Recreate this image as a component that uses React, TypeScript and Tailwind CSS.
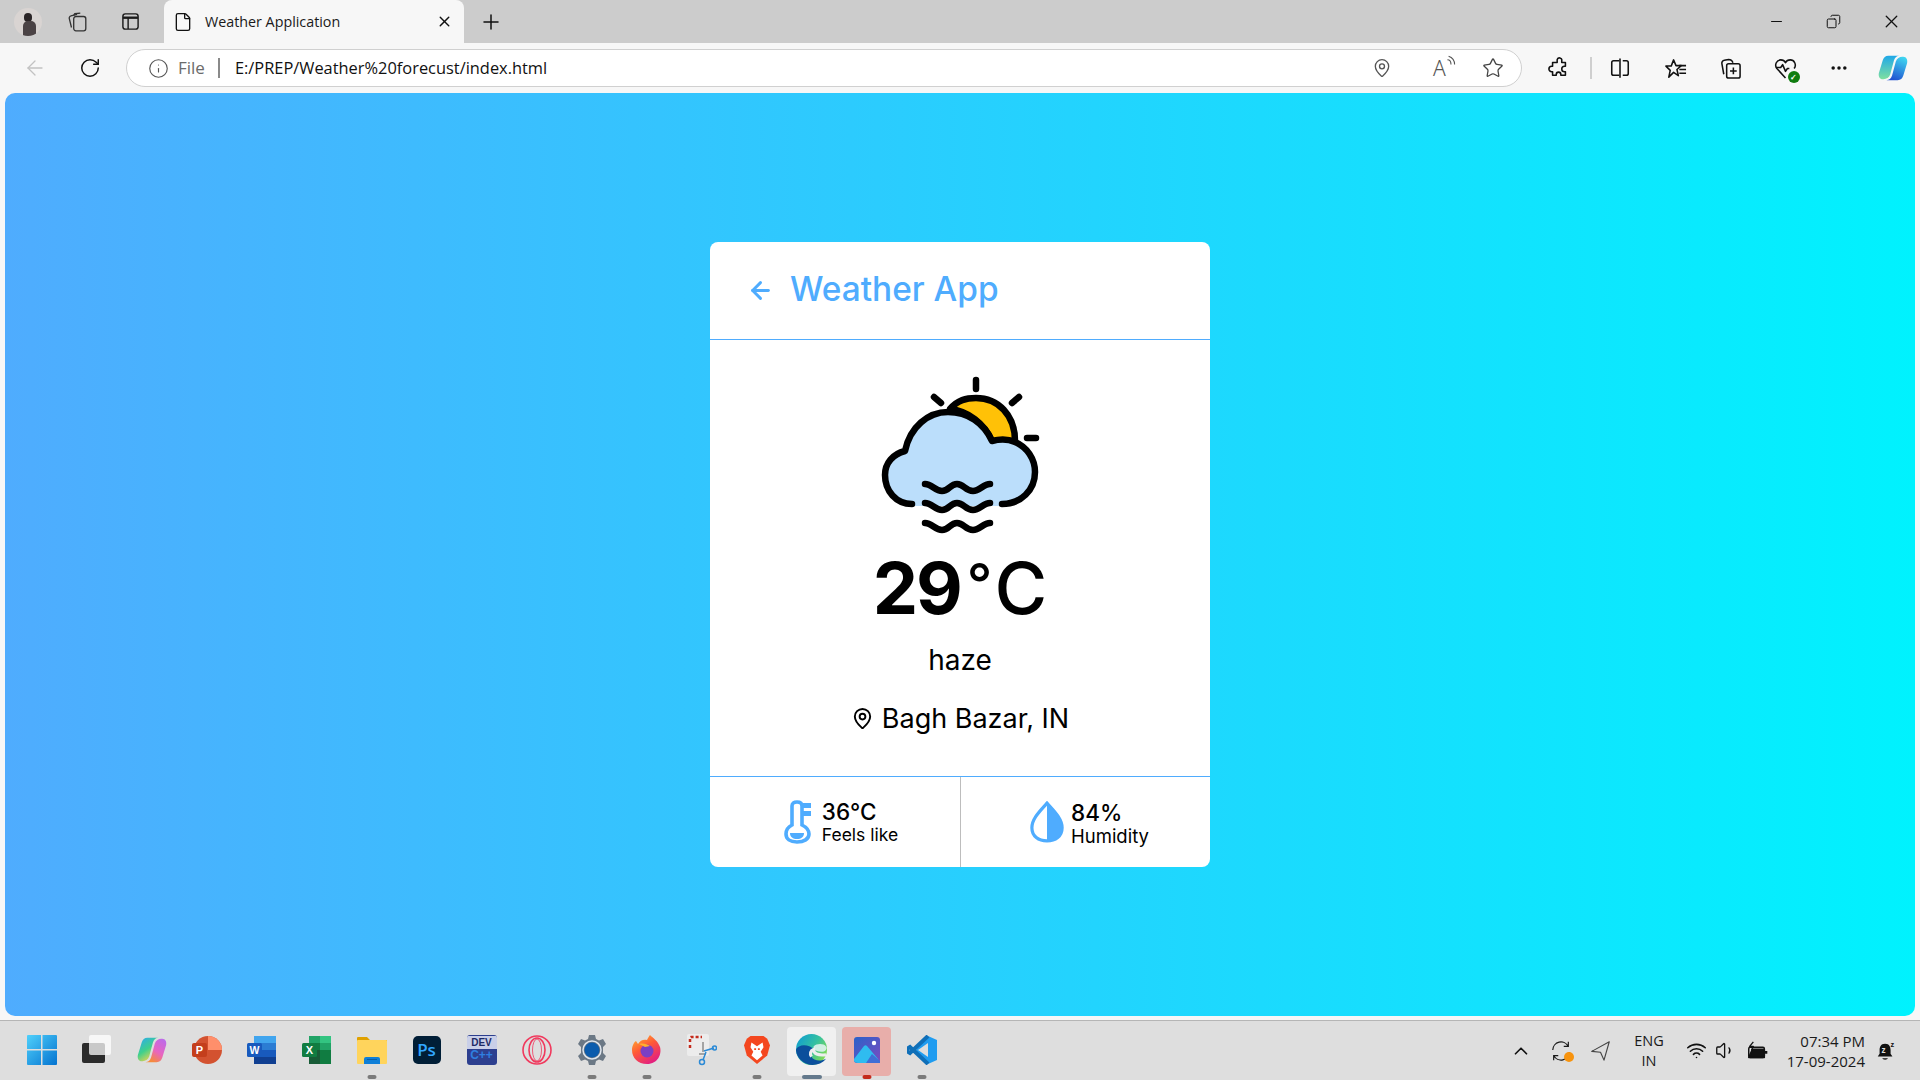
import { ArrowLeft, ChevronUp, Copy, File, Info, MapPin, Minus, MoreHorizontal, Plus, RotateCw, Star, Volume1, Wifi, X } from "lucide-react";
import type { ReactNode } from "react";

const sans = "font-['Open_Sans','Noto_Sans',sans-serif]";

function Slot({ w, children }: { w: string; children: ReactNode }) {
    return <div className={`flex shrink-0 items-center justify-center ${w}`}>{children}</div>;
}

// Weather glyph - traced from the reference
function HazeIcon() {
    return (
        <svg viewBox="20 10 160 160" className="h-[160px] w-[160px]" fill="none" strokeLinecap="round" strokeLinejoin="round">
            <path d="M90 44C98 35 106 33 116 33C138 33 155 50 155 76L132 76C124 58 108 46 90 44Z" fill="#ffc107" stroke="#000" strokeWidth="6.5" />
            <path d="M52 139C36 139 25 126 25 110C25 98 33 89 45 86C50 62 68 47 88 47C108 47 124 58 132 76C140 74 148 74 155 77C167 82 175 94 175 107C175 125 161 139 142 139L142 141L52 141Z" fill="#bbdefb" />
            <path d="M52 139C36 139 25 126 25 110C25 98 33 89 45 86C50 62 68 47 88 47C108 47 124 58 132 76C140 74 148 74 155 77C167 82 175 94 175 107C175 125 161 139 142 139" stroke="#000" strokeWidth="6.5" />
            <path d="M116 15V24M74 32L81 38M159 32L152 38M167 73H176" stroke="#000" strokeWidth="6.5" />
            <path d="M65 119C72 119 75 126 82 126C89 126 90 119 97 119C104 119 105 126 113 126C120 126 123 119 130 119" stroke="#000" strokeWidth="6.5" />
            <path d="M65 138C72 138 75 145 82 145C89 145 90 138 97 138C104 138 105 145 113 145C120 145 123 138 130 138" stroke="#000" strokeWidth="6.5" />
            <path d="M65 158C72 158 75 165 82 165C89 165 90 158 97 158C104 158 105 165 113 165C120 165 123 158 130 158" stroke="#000" strokeWidth="6.5" />
        </svg>
    );
}

function ThermoIcon() {
    return (
        <svg viewBox="0 0 28 44" className="h-[44px] w-[28px]" fill="none">
            <path d="M8 25V6C8 3 10 2 13 2C16 2 18 3 18 6V25C22 27 25 30 25 34C25 39 20 42 13 42C6 42 2 39 2 34C2 30 4 27 8 25Z" stroke="#4facfe" strokeWidth="3.6" />
            <path d="M6 33H20C20 37 17 39 13 39C9 39 6 37 6 33Z" fill="#4facfe" />
            <path d="M19 3H27V8H19ZM19 11H27V16H19Z" fill="#4facfe" />
        </svg>
    );
}

function DropIcon() {
    return (
        <svg viewBox="0 0 36 44" className="h-[44px] w-[34px]" fill="none">
            <path d="M18 2C12 9 2 18 2 28C2 37 9 42 18 42C27 42 34 37 34 28C34 18 24 9 18 2Z" stroke="#4facfe" strokeWidth="3.4" />
            <path d="M18 2C24 9 34 18 34 28C34 37 27 42 18 42Z" fill="#4facfe" />
        </svg>
    );
}

function WindowsLogo() {
    return (
        <svg viewBox="0 0 30 30" className="h-[30px] w-[30px]">
            <defs>
                <linearGradient id="win" x1="0" y1="0" x2="1" y2="1">
                    <stop offset="0" stopColor="#4fd0fb" />
                    <stop offset="1" stopColor="#0473d0" />
                </linearGradient>
            </defs>
            <path d="M0 1a1 1 0 0 1 1-1h13v14H0ZM15.5 0H29a1 1 0 0 1 1 1v13H15.5ZM0 15.5h14V30H1a1 1 0 0 1-1-1ZM15.5 15.5H30V29a1 1 0 0 1-1 1H15.5Z" fill="url(#win)" />
        </svg>
    );
}

function TaskView() {
    return (
        <svg viewBox="0 0 30 30" className="h-[30px] w-[30px]">
            <rect x="0" y="8" width="23" height="20" rx="2" fill="#2b2b2b" />
            <rect x="7" y="0" width="22" height="20" rx="2" fill="#fff" opacity="0.75" />
        </svg>
    );
}

// Two ribbons, second one is the first turned half way round
function CopilotTaskbar() {
    return (
        <svg viewBox="0 0 32 32" className="h-[30px] w-[30px]">
            <defs>
                <linearGradient id="cta" x1="0" y1="0" x2="0.6" y2="1">
                    <stop offset="0" stopColor="#2aa8f5" />
                    <stop offset="0.55" stopColor="#3fd08c" />
                    <stop offset="1" stopColor="#f5d34c" />
                </linearGradient>
                <linearGradient id="ctb" x1="1" y1="0" x2="0.4" y2="1">
                    <stop offset="0" stopColor="#b56cf0" />
                    <stop offset="0.6" stopColor="#e865c0" />
                    <stop offset="1" stopColor="#f58a3c" />
                </linearGradient>
            </defs>
            <path d="M11 3H23C20 3 18 5 17 8L13 23C12 26 9 28 6 28H5C2 28 0 25 1 21L5 8C6 5 8 3 11 3Z" fill="url(#cta)" />
            <path d="M21 29H9C12 29 14 27 15 24L19 9C20 6 23 4 26 4H27C30 4 32 7 31 11L27 24C26 27 24 29 21 29Z" fill="url(#ctb)" />
        </svg>
    );
}

function PowerPoint() {
    return (
        <svg viewBox="0 0 30 30" className="h-[30px] w-[30px]">
            <circle cx="16" cy="15" r="14" fill="#d35230" />
            <path d="M16 1A14 14 0 0 1 30 15H16Z" fill="#ff8f6b" />
            <rect x="0" y="8" width="15" height="14" rx="2" fill="#c43e1c" />
            <text x="7.5" y="19" textAnchor="middle" fontSize="11" fontWeight="700" fill="#fff" fontFamily="Liberation Sans">P</text>
        </svg>
    );
}

function Word() {
    return (
        <svg viewBox="0 0 30 30" className="h-[30px] w-[30px]">
            <rect x="7" y="1" width="22" height="7" fill="#41a5ee" />
            <rect x="7" y="8" width="22" height="7" fill="#2b7cd3" />
            <rect x="7" y="15" width="22" height="7" fill="#185abd" />
            <rect x="7" y="22" width="22" height="7" fill="#103f91" />
            <rect x="0" y="8" width="15" height="14" rx="1.5" fill="#185abd" />
            <text x="7.5" y="19" textAnchor="middle" fontSize="10.5" fontWeight="700" fill="#fff" fontFamily="Liberation Sans">W</text>
        </svg>
    );
}

function Excel() {
    return (
        <svg viewBox="0 0 30 30" className="h-[30px] w-[30px]">
            <rect x="7" y="1" width="11" height="7" fill="#21a366" />
            <rect x="18" y="1" width="11" height="7" fill="#33c481" />
            <rect x="7" y="8" width="11" height="7" fill="#107c41" />
            <rect x="18" y="8" width="11" height="7" fill="#21a366" />
            <rect x="7" y="15" width="11" height="14" fill="#185c37" />
            <rect x="18" y="15" width="11" height="14" fill="#107c41" />
            <rect x="0" y="8" width="15" height="14" rx="1.5" fill="#107c41" />
            <text x="7.5" y="19" textAnchor="middle" fontSize="11" fontWeight="700" fill="#fff" fontFamily="Liberation Sans">X</text>
        </svg>
    );
}

function Folder() {
    return (
        <svg viewBox="0 0 30 30" className="h-[30px] w-[30px]">
            <path d="M0 3a1 1 0 0 1 1-1h9l3 3h17v5H0Z" fill="#e0a100" />
            <rect x="0" y="5" width="30" height="24" rx="1" fill="#ffd45c" />
            <path d="M7 29V24a2 2 0 0 1 2-2h12a2 2 0 0 1 2 2v5Z" fill="#0f7fd8" />
            <rect x="10" y="24" width="10" height="1" fill="#0a5ea6" />
        </svg>
    );
}

function Photoshop() {
    return (
        <div className={`flex h-[28px] w-[28px] items-center justify-center rounded-[5px] bg-[#001e36] text-[17px] leading-none font-semibold text-[#31a8ff] ${sans}`}>
            Ps
        </div>
    );
}

function DevCpp() {
    return (
        <div className="flex h-[30px] w-[30px] flex-col items-center overflow-hidden rounded-[3px] bg-[#2d3f8f] font-['Liberation_Sans',sans-serif] text-[10px] leading-[13px] font-bold">
            <span className="mt-[1px] w-full bg-[#c9cfe8] text-center text-[#1e2a66]">DEV</span>
            <span className="text-[12px] text-[#2f7fe0]">C++</span>
        </div>
    );
}

function Opera() {
    return (
        <svg viewBox="0 0 30 30" className="h-[30px] w-[30px]" fill="none" stroke="#f0395d" strokeWidth="1.6">
            <circle cx="15" cy="15" r="14" />
            <ellipse cx="15" cy="15" rx="8" ry="12" />
            <ellipse cx="15" cy="15" rx="4.5" ry="11" strokeWidth="0.8" />
        </svg>
    );
}

function Gear() {
    return (
        <svg viewBox="0 0 30 30" className="h-[30px] w-[30px]">
            <path d="M12 0h6l1 4 3 1.500 4-1.500 3 5-3 3v6l3 3-3 5-4-1.500-3 1.500-1 4h-6l-1-4-3-1.500-4 1.500-3-5 3-3v-6l-3-3 3-5 4 1.500 3-1.500Z" fill="#6b7885" />
            <circle cx="15" cy="15" r="7.500" fill="#0b5cad" />
            <circle cx="15" cy="15" r="9" fill="none" stroke="#dfe6ee" strokeWidth="1.500" />
        </svg>
    );
}

function Firefox() {
    return (
        <svg viewBox="0 0 30 30" className="h-[30px] w-[30px]">
            <defs>
                <linearGradient id="ffx" x1="0" y1="0" x2="0.6" y2="1">
                    <stop offset="0" stopColor="#ffbd2e" />
                    <stop offset="0.5" stopColor="#ff5a36" />
                    <stop offset="1" stopColor="#e3217f" />
                </linearGradient>
            </defs>
            <path d="M18 0C21 3 26 6 28 12C30 19 26 29 15 29C6 29 0 23 0 15C0 11 2 7 4 6L6 9C8 5 12 4 15 5C16 3 17 1 18 0Z" fill="url(#ffx)" />
            <circle cx="15" cy="16" r="6.500" fill="#7b3fc4" />
            <path d="M7 9C11 8 15 9 18 11L13 12Z" fill="#ffb02e" />
        </svg>
    );
}

function Snip() {
    return (
        <svg viewBox="0 0 30 32" className="h-[32px] w-[30px]" fill="none">
            <rect x="0" y="0" width="22" height="22" rx="2" fill="#ececec" />
            <path d="M3 8V4a1 1 0 0 1 1-1h11" stroke="#c42b1c" strokeWidth="2.500" strokeDasharray="3 2" />
            <path d="M3 11v5" stroke="#c42b1c" strokeWidth="2.500" strokeDasharray="3 2" />
            <path d="M16 8v10M12 20l7 0" stroke="#8c8c8c" strokeWidth="1.500" />
            <path d="M17 17L27 14M19 18L16 26" stroke="#2b8ad6" strokeWidth="1.500" />
            <circle cx="27.500" cy="14" r="2" stroke="#2b8ad6" strokeWidth="1.500" />
            <circle cx="15" cy="28" r="2.500" stroke="#2b8ad6" strokeWidth="1.500" />
        </svg>
    );
}

function Brave() {
    return (
        <svg viewBox="0 0 28 32" className="h-[30px] w-[26px]">
            <path d="M7 1H21L25 4L28 11L25 22L14 31L3 22L0 11L3 4Z" fill="#f4471f" />
            <path d="M14 12L8 8L7 13L10 18L8 22L14 27L20 22L18 18L21 13L20 8Z" fill="#fff" />
            <path d="M11 14h2v2h-2ZM15 14h2v2h-2Z" fill="#f4471f" />
        </svg>
    );
}

function Edge() {
    return (
        <svg viewBox="0 0 30 30" className="h-[31px] w-[31px]">
            <defs>
                <linearGradient id="edg" x1="0" y1="0" x2="1" y2="0.6">
                    <stop offset="0" stopColor="#0c9ad6" />
                    <stop offset="0.6" stopColor="#35c1a0" />
                    <stop offset="1" stopColor="#7ed957" />
                </linearGradient>
            </defs>
            <circle cx="15" cy="15" r="15" fill="url(#edg)" />
            <path d="M0 16C1 24 8 30 16 30C21 30 26 28 29 24C24 27 17 26 15 22C13 19 14 16 17 15C14 11 7 10 3 12C1 13 0 14 0 16Z" fill="#0b4f9c" />
            <path d="M17 15C20 16 22 18 27 17C30 15 30 13 29 12C27 9 20 9 17 12Z" fill="#dff3ee" opacity="0.9" />
            <path d="M15 22C13 19 14 16 17 15C17 19 21 21 29 20" fill="none" stroke="#eeeeee" strokeWidth="3" />
        </svg>
    );
}

function Photos() {
    return (
        <svg viewBox="0 0 26 26" className="h-[26px] w-[26px]">
            <defs>
                <linearGradient id="pho" x1="0" y1="0" x2="1" y2="1">
                    <stop offset="0" stopColor="#2a62c9" />
                    <stop offset="1" stopColor="#7c4bc0" />
                </linearGradient>
            </defs>
            <rect width="26" height="26" rx="3" fill="url(#pho)" />
            <circle cx="20" cy="6" r="2.200" fill="#fff" />
            <path d="M0 22L10 9C11 8 12 8 13 9L24 22C25 24 24 26 22 26H4C1 26 -1 24 0 22Z" fill="#2fbcf0" />
            <path d="M12 26L18 17L26 24V26Z" fill="#3f6fd6" />
        </svg>
    );
}

function VsCode() {
    return (
        <svg viewBox="0 0 30 30" className="h-[30px] w-[30px]">
            <path d="M21 1L30 5V25L21 29L8 16L21 1Z" fill="#1f9cf0" />
            <path d="M21 8V22L11 15Z" fill="#dedede" />
            <path d="M21 1L3 18L0 16V14L3 12L21 29" fill="none" stroke="#0f6fb8" strokeWidth="4" />
        </svg>
    );
}

const apps: { icon: ReactNode; dot?: string; tile?: string }[] = [
    { icon: <WindowsLogo /> },
    { icon: <TaskView /> },
    { icon: <CopilotTaskbar /> },
    { icon: <PowerPoint /> },
    { icon: <Word /> },
    { icon: <Excel /> },
    { icon: <Folder />, dot: "w-[9px] bg-[#7a7a7a]" },
    { icon: <Photoshop /> },
    { icon: <DevCpp /> },
    { icon: <Opera /> },
    { icon: <Gear />, dot: "w-[9px] bg-[#7a7a7a]" },
    { icon: <Firefox />, dot: "w-[9px] bg-[#7a7a7a]" },
    { icon: <Snip /> },
    { icon: <Brave />, dot: "w-[9px] bg-[#7a7a7a]" },
    { icon: <Edge />, dot: "w-[20px] bg-[#64798c]", tile: "bg-[#f0f0f0]" },
    { icon: <Photos />, dot: "w-[9px] bg-[#c42b1c]", tile: "bg-[#e8aeaa]" },
    { icon: <VsCode />, dot: "w-[9px] bg-[#7a7a7a]" },
];

function TitleBar() {
    return (
        <div className="flex h-[43px] shrink-0 items-end bg-[#cccccc]">
            <Slot w="w-[56px] self-center">
                <div className="relative h-[28px] w-[28px] overflow-hidden rounded-full bg-[#d9d4d2]">
                    <div className="absolute top-[5px] left-[10px] h-[9px] w-[8px] rounded-full bg-[#2b2526]" />
                    <div className="absolute top-[13px] left-[9px] h-[15px] w-[13px] rounded-t-[5px] bg-[#4b4345]" />
                </div>
            </Slot>
            <Slot w="w-[50px] self-center ml-[-4px]">
                <svg viewBox="0 0 20 20" className="h-[22px] w-[22px]" fill="none" stroke="#333" strokeWidth="1.200">
                    <rect x="7" y="5" width="11" height="13" rx="2" fill="#ccc" />
                    <path d="M5 15L3 7a2 2 0 0 1 1.500-2.500L10 3" />
                    <path d="M7 4L8 2.500L13 2" />
                </svg>
            </Slot>
            <Slot w="w-[56px] self-center">
                <svg viewBox="0 0 20 20" className="h-[19px] w-[19px]" fill="none" stroke="#1a1a1a" strokeWidth="1.500">
                    <rect x="2" y="2" width="16" height="16" rx="2.500" />
                    <path d="M2 6H18" strokeWidth="2.500" />
                    <path d="M7.500 6V18" />
                </svg>
            </Slot>
            <div className={`ml-[6px] flex h-[43px] w-[300px] items-center rounded-t-[8px] bg-[#f7f7f7] ${sans}`}>
                <File className="ml-[9px] h-[20px] w-[20px] text-[#111]" strokeWidth={1.6} />
                <span className="ml-[12px] flex-1 text-[14.3px] text-[#1a1a1a]">Weather Application</span>
                <X className="mr-[11px] h-[17px] w-[17px] text-[#111]" strokeWidth={2} />
            </div>
            <Slot w="w-[54px] self-center">
                <Plus className="h-[24px] w-[24px] text-[#111]" strokeWidth={1.5} />
            </Slot>
            <div className="flex-1" />
            <Slot w="w-[57px] self-center">
                <Minus className="h-[17px] w-[17px] text-[#111]" strokeWidth={1.6} />
            </Slot>
            <Slot w="w-[57px] self-center">
                <Copy className="h-[15px] w-[15px] scale-x-[-1] text-[#111]" strokeWidth={1.6} />
            </Slot>
            <Slot w="w-[58px] self-center">
                <X className="h-[21px] w-[21px] text-[#111]" strokeWidth={1.5} />
            </Slot>
        </div>
    );
}

function Toolbar() {
    return (
        <div className={`flex h-[50px] shrink-0 items-center bg-[#f7f7f7] ${sans}`}>
            <Slot w="w-[70px]">
                <ArrowLeft className="h-[24px] w-[24px] text-[#c2c2c2]" strokeWidth={1.3} />
            </Slot>
            <Slot w="w-[40px]">
                <RotateCw className="h-[22px] w-[22px] text-[#111]" strokeWidth={1.6} />
            </Slot>
            <div className="ml-[16px] flex h-[38px] w-[1396px] items-center rounded-full border border-[#d0d0d0] bg-white">
                <Info className="ml-[21px] h-[21px] w-[21px] text-[#555]" strokeWidth={1.3} />
                <span className="ml-[9px] text-[17px] text-[#6b6b6b]">File</span>
                <span className="ml-[13px] h-[20px] w-[2px] bg-[#8a8a8a]" />
                <span className="ml-[15px] flex-1 text-[16.4px] text-[#111]">E:/PREP/Weather%20forecust/index.html</span>
                <MapPin className="mr-[41px] h-[20px] w-[20px] text-[#555]" strokeWidth={1.6} />
                <div className="relative mr-[29px] h-[24px] w-[20px] font-['Noto_Sans',sans-serif] text-[21px] leading-[24px] font-light text-[#555]">
                    A
                    <svg viewBox="0 0 10 10" className="absolute top-[-1px] right-[-4px] h-[12px] w-[12px]" fill="none" stroke="#555" strokeWidth="0.9">
                        <path d="M3 1C6 2 8 4 8 8M2 4C4 4 5 6 5 8" />
                    </svg>
                </div>
                <Star className="mr-[17px] h-[22px] w-[22px] text-[#444]" strokeWidth={1.4} />
            </div>
            <Slot w="w-[68px] pl-[6px]">
                <svg viewBox="0 0 24 24" className="h-[22px] w-[22px]" fill="none" stroke="#111" strokeWidth="1.700" strokeLinejoin="round">
                    <path d="M10 3a2.500 2.500 0 0 1 5 1v2h4v4h-1a3 3 0 0 0 0 6h1v4h-5v-1a2.500 2.500 0 0 0-5 0v1H5v-4H4a3 3 0 0 1 0-6h1V6h5Z" />
                </svg>
            </Slot>
            <span className="h-[22px] w-[2px] bg-[#cfcfcf]" />
            <Slot w="w-[56px]">
                <svg viewBox="0 0 24 24" className="h-[22px] w-[22px]" fill="none" stroke="#111" strokeWidth="1.700">
                    <path d="M11 4H5a2 2 0 0 0-2 2v12a2 2 0 0 0 2 2h6M15 4h4a2 2 0 0 1 2 2v12a2 2 0 0 1-2 2h-4M12 1.500V22.500" />
                </svg>
            </Slot>
            <Slot w="w-[54px]">
                <svg viewBox="0 0 24 24" className="h-[23px] w-[23px]" fill="none" stroke="#111" strokeWidth="1.600" strokeLinejoin="round">
                    <path d="M10 3L12.500 9H18L13.500 13L15 19.500L10 16L5 21L6.500 14L2 9.500H7.500Z" />
                    <path d="M16 9H23M16 13H23M16 17H23" />
                </svg>
            </Slot>
            <Slot w="w-[56px]">
                <svg viewBox="0 0 24 24" className="h-[23px] w-[23px]" fill="none" stroke="#111" strokeWidth="1.600">
                    <rect x="8" y="7" width="14" height="15" rx="2" />
                    <path d="M15 11V18M11.500 14.500H18.500M5 18L3 7a3 3 0 0 1 2.500-3.500L10 2.500C12 2.500 14 4 14.500 6" />
                </svg>
            </Slot>
            <Slot w="w-[54px]">
                <div className="relative h-[23px] w-[23px]">
                    <svg viewBox="0 0 24 24" className="h-[23px] w-[23px]" fill="none" stroke="#111" strokeWidth="1.600" strokeLinejoin="round">
                        <path d="M12 22L3 12C0 8 3 3 7 3C9 3 11 4 12 6C13 4 15 3 17 3C21 3 24 8 21 12" />
                        <path d="M2 11H7L9 8L12 15L14 12H16" />
                    </svg>
                    <div className="absolute right-[-3px] bottom-[-3px] flex h-[12px] w-[12px] items-center justify-center rounded-full bg-[#107c10] text-[8px] leading-none font-bold text-white">
                        ✓
                    </div>
                </div>
            </Slot>
            <Slot w="w-[54px]">
                <MoreHorizontal className="h-[20px] w-[20px] text-[#111]" strokeWidth={2.2} />
            </Slot>
            <Slot w="w-[54px]">
                <svg viewBox="0 0 32 32" className="h-[30px] w-[30px]">
                    <defs>
                        <linearGradient id="cpa" x1="0" y1="0" x2="0" y2="1">
                            <stop offset="0" stopColor="#1fa8e8" />
                            <stop offset="1" stopColor="#7fe0a0" />
                        </linearGradient>
                        <linearGradient id="cpb" x1="0.7" y1="0" x2="0.3" y2="1">
                            <stop offset="0" stopColor="#3fd4f0" />
                            <stop offset="1" stopColor="#1f4fd0" />
                        </linearGradient>
                    </defs>
                    <path d="M11 3H23C20 3 18 5 17 8L13 23C12 26 9 28 6 28H5C2 28 0 25 1 21L5 8C6 5 8 3 11 3Z" fill="url(#cpa)" />
                    <path d="M21 29H9C12 29 14 27 15 24L19 9C20 6 23 4 26 4H27C30 4 32 7 31 11L27 24C26 27 24 29 21 29Z" fill="url(#cpb)" />
                </svg>
            </Slot>
        </div>
    );
}

function WeatherCard() {
    return (
        <div className="flex h-[625px] w-[500px] flex-col overflow-hidden rounded-[8px] bg-white font-['Inter',sans-serif]">
            <header className="flex h-[98px] shrink-0 items-center border-b border-[#4facfe] pl-[37px] text-[#4facfe]">
                <ArrowLeft className="h-[27px] w-[27px]" strokeWidth={2.6} />
                <h1 className="ml-[16px] text-[33.400px] leading-none font-medium">Weather App</h1>
            </header>
            <main className="flex flex-1 flex-col items-center pt-[35px]">
                <HazeIcon />
                <div className="mt-[13px] flex h-[80px] items-start font-bold text-black">
                    <span className="text-[72px] leading-[80px] tracking-[-2px]">29</span>
                    <span className="ml-[6px] text-[56px] leading-[72px] font-medium">°</span>
                    <span className="ml-[2px] text-[72px] leading-[80px] font-medium">C</span>
                </div>
                <p className="mt-[16px] text-[28px] leading-[32px] text-black">haze</p>
                <div className="mt-[27px] flex items-center gap-[8px] text-[27px] leading-[32px] text-black">
                    <MapPin className="h-[23px] w-[23px]" strokeWidth={2} />
                    Bagh Bazar, IN
                </div>
            </main>
            <footer className="flex h-[91px] shrink-0 border-t border-[#4facfe]">
                <div className="flex w-[250px] items-center justify-center gap-[10px] pl-[12px]">
                    <ThermoIcon />
                    <div className="text-black">
                        <div className="text-[22.500px] leading-[26px] font-medium">36°C</div>
                        <div className="text-[17.500px] leading-[20px]">Feels like</div>
                    </div>
                </div>
                <div className="flex flex-1 items-center justify-center gap-[7px] border-l border-[#bdbdbd] pl-[8px]">
                    <DropIcon />
                    <div className="mt-[2px] text-black">
                        <div className="text-[22.500px] leading-[26px] font-medium">84%</div>
                        <div className="text-[18.500px] leading-[20px]">Humidity</div>
                    </div>
                </div>
            </footer>
        </div>
    );
}

function TaskBar() {
    return (
        <div className={`flex h-[60px] shrink-0 items-center border-t border-[#b5b5b5] bg-[#dedede] pl-[14px] ${sans}`}>
            {apps.map((app, i) => (
                <div key={i} className="relative flex h-[60px] w-[55px] shrink-0 items-center justify-center pb-[2px]">
                    {app.tile && <div className={`absolute top-[6px] left-[3px] h-[49px] w-[49px] rounded-[4px] ${app.tile}`} />}
                    <div className="relative">{app.icon}</div>
                    {app.dot && <div className={`absolute bottom-[2px] left-1/2 h-[4px] -translate-x-1/2 rounded-full ${app.dot}`} />}
                </div>
            ))}
            <div className="flex-1" />
            <ChevronUp className="h-[22px] w-[22px] text-[#111]" strokeWidth={1.8} />
            <div className="relative ml-[18px] h-[24px] w-[22px]">
                <svg viewBox="0 0 24 24" className="h-[24px] w-[22px]" fill="none" stroke="#1a1a1a" strokeWidth="1.300">
                    <path d="M3 11A9 9 0 0 1 20 7M20 2V7H15M21 13A9 9 0 0 1 4 17M4 22V17H9" />
                </svg>
                <div className="absolute right-[-2px] bottom-[1px] h-[10px] w-[10px] rounded-full bg-[#f7930e]" />
            </div>
            <svg viewBox="0 0 24 24" className="ml-[18px] h-[21px] w-[21px]" fill="none" stroke="#444" strokeWidth="1.300" strokeLinejoin="round">
                <path d="M22 2L2 13L12 14L16 23Z" />
            </svg>
            <div className="ml-[19px] w-[38px] text-center text-[14.500px] leading-[20px] text-[#1a1a1a]">
                ENG
                <br />
                IN
            </div>
            <Wifi className="ml-[18px] h-[21px] w-[21px] text-[#111]" strokeWidth={1.8} />
            <Volume1 className="ml-[8px] h-[21px] w-[21px] text-[#111]" strokeWidth={1.5} />
            <svg viewBox="0 0 24 24" className="ml-[10px] h-[22px] w-[22px]" fill="none" stroke="#111" strokeWidth="1.600" strokeLinejoin="round">
                <rect x="3" y="8" width="17" height="11" rx="1.500" />
                <path d="M3 19L7 10H20V19Z" fill="#111" />
                <path d="M8 2L4 7H8L6 11" strokeWidth="1.400" />
                <path d="M22 12V15" strokeWidth="2.500" />
            </svg>
            <div className="ml-[11px] w-[86px] text-right text-[15px] leading-[20px] text-[#1a1a1a]">
                07:34 PM
                <br />
                17-09-2024
            </div>
            <svg viewBox="0 0 24 24" className="mr-[23px] ml-[10px] h-[22px] w-[22px]" fill="#111">
                <path d="M11 4C6 4 5 8 5 11V15L3 18H19L17 15V11C17 8 16 4 11 4ZM8 20H14C14 22 8 22 8 20Z" />
                <text x="7" y="14" fontSize="9" fontWeight="700" fill="#dedede" fontFamily="Liberation Sans">z</text>
                <text x="17" y="8" fontSize="8" fontWeight="700" fill="#111" fontFamily="Liberation Sans">z</text>
            </svg>
        </div>
    );
}

export default function App() {
    return (
        <div className="flex h-screen w-screen flex-col overflow-hidden bg-[#f7f7f7]">
            <TitleBar />
            <Toolbar />
            <div className="flex min-h-0 flex-1 px-[5px] pb-[4px]">
                <div className="flex flex-1 items-center justify-center rounded-[10px] bg-linear-to-r/srgb from-[#4facfe] to-[#00f2fe] pb-[1px]">
                    <WeatherCard />
                </div>
            </div>
            <TaskBar />
        </div>
    );
}
